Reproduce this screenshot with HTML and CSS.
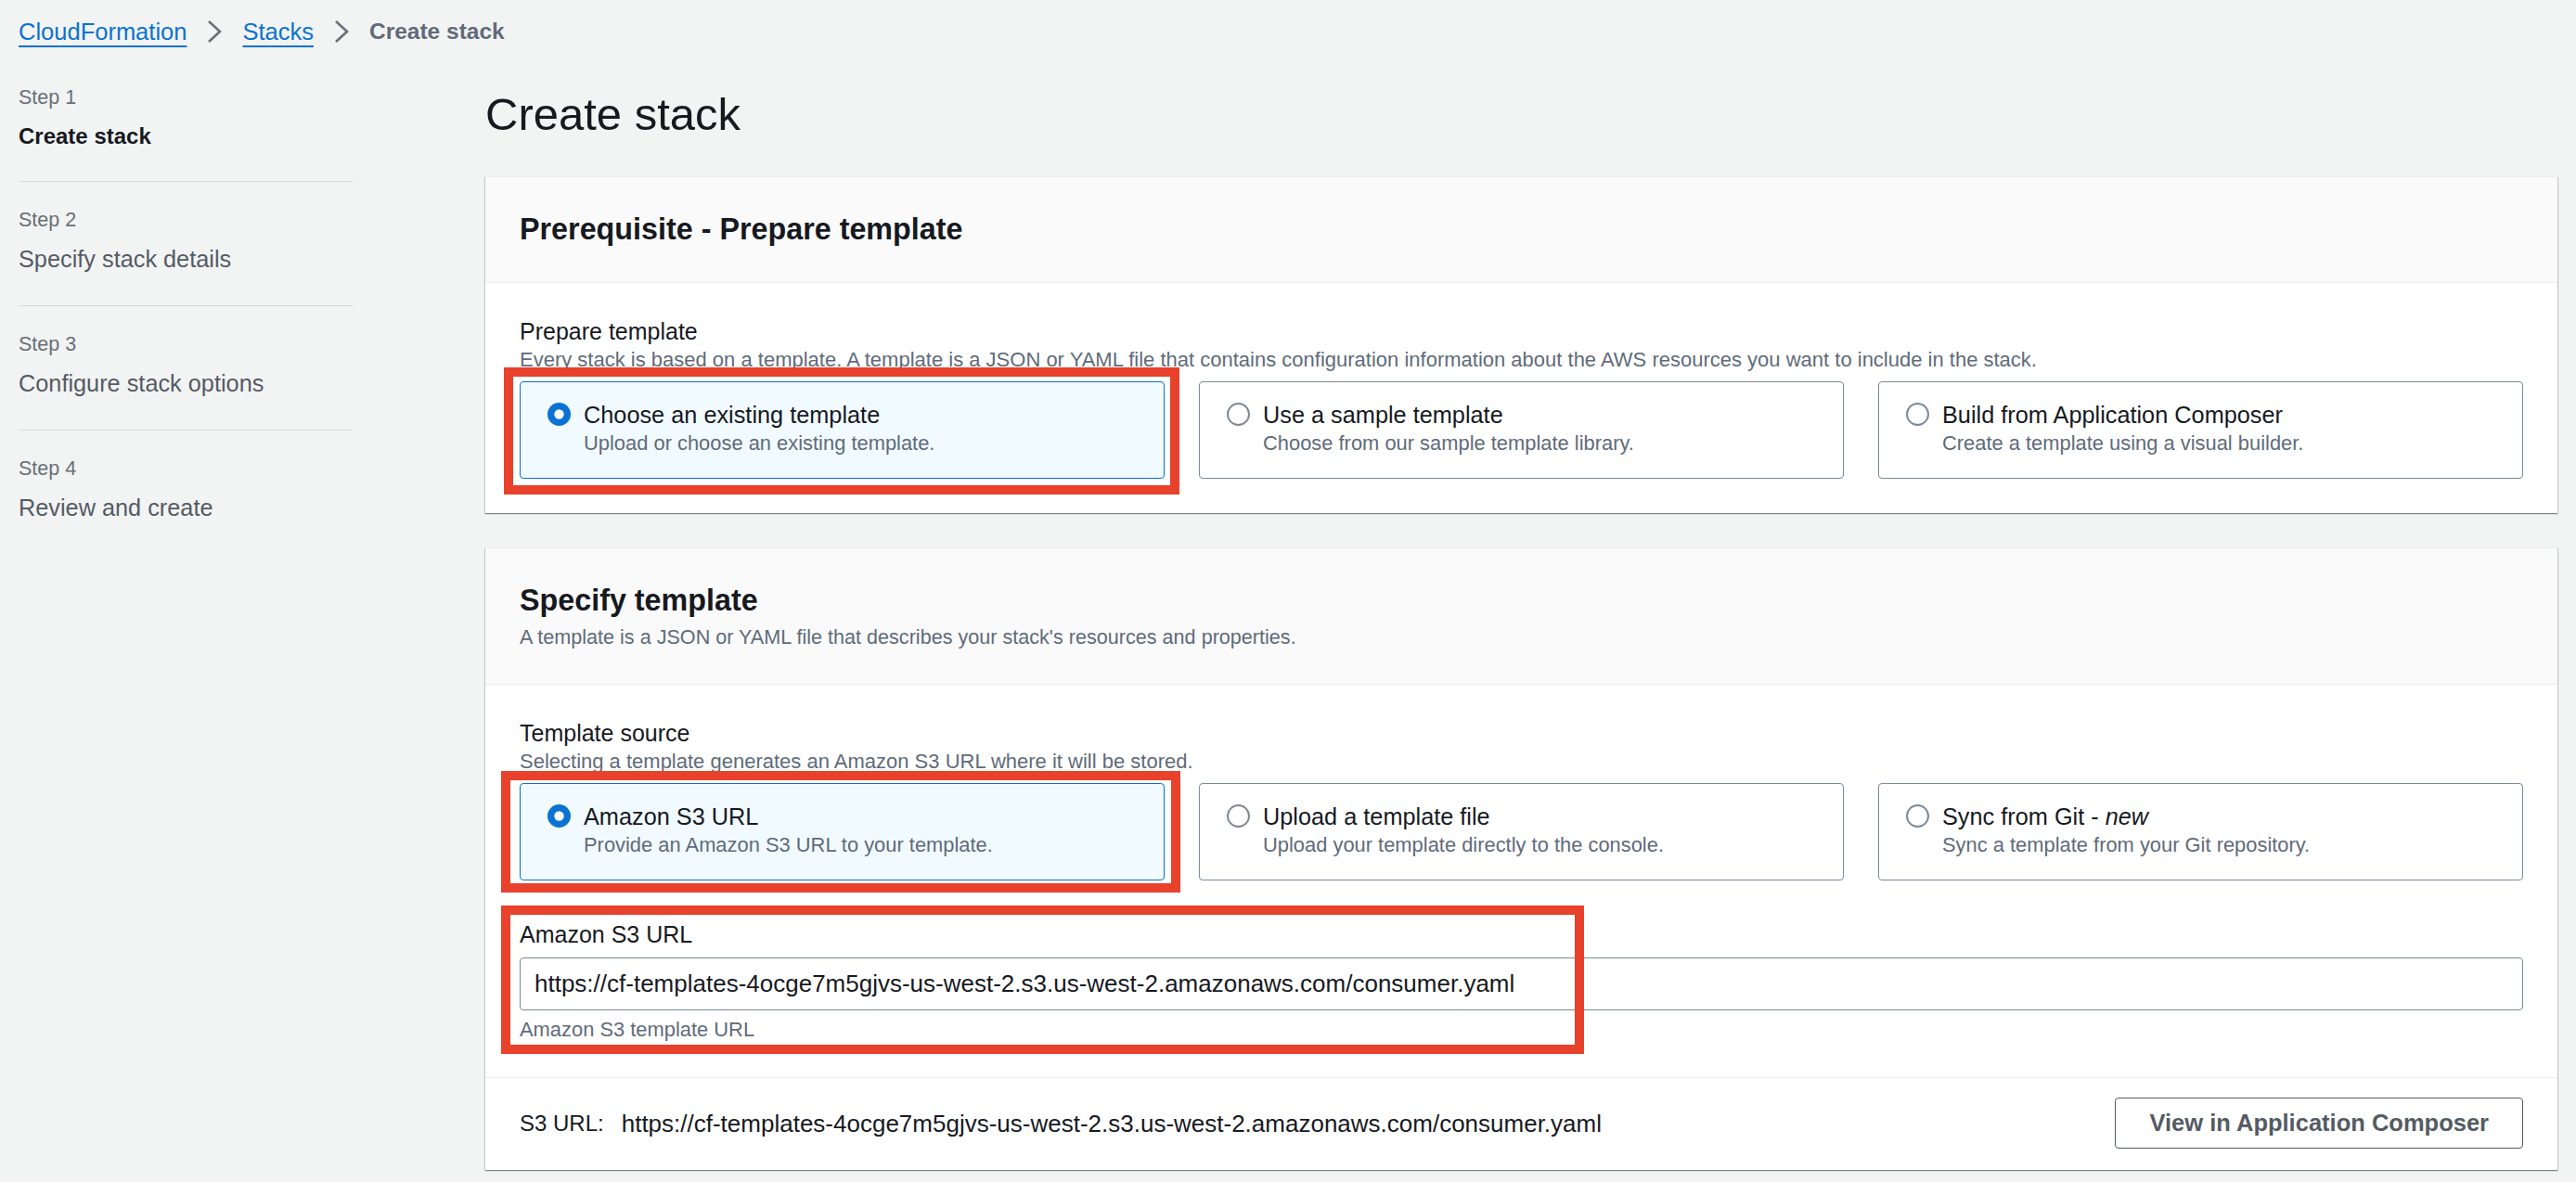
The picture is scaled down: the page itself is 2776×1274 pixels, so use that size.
FILE: index.html
```html
<!DOCTYPE html>
<html lang="en">
<head>
<meta charset="utf-8">
<title>Create stack</title>
<link rel="stylesheet" href="styles.css">
</head>
<body>
<nav class="breadcrumbs">
  <a class="crumb-link" href="#">CloudFormation</a>
  <svg class="crumb-sep" viewBox="0 0 18 26"><polyline points="3,2 15,13 3,24"/></svg>
  <a class="crumb-link" href="#">Stacks</a>
  <svg class="crumb-sep" viewBox="0 0 18 26"><polyline points="3,2 15,13 3,24"/></svg>
  <span class="crumb-current">Create stack</span>
</nav>
<div class="wizard">
  <ol class="steps">
    <li class="step step-active"><span class="step-num">Step 1</span><span class="step-title">Create stack</span></li>
    <li class="step"><span class="step-num">Step 2</span><span class="step-title">Specify stack details</span></li>
    <li class="step"><span class="step-num">Step 3</span><span class="step-title">Configure stack options</span></li>
    <li class="step"><span class="step-num">Step 4</span><span class="step-title">Review and create</span></li>
  </ol>
  <main class="main">
    <h1 class="page-title">Create stack</h1>

    <section class="card">
      <header class="card-header">
        <h2 class="card-title">Prerequisite - Prepare template</h2>
      </header>
      <div class="card-body">
        <div class="field-label">Prepare template</div>
        <div class="field-desc">Every stack is based on a template. A template is a JSON or YAML file that contains configuration information about the AWS resources you want to include in the stack.</div>
        <div class="tiles">
          <div class="tile tile-selected">
            <svg class="radio" viewBox="0 0 25 25"><circle cx="12.5" cy="12.5" r="12.5" class="radio-on"/><circle cx="12.5" cy="12.5" r="5.2" class="radio-dot"/></svg>
            <div class="tile-text">
              <div class="tile-title">Choose an existing template</div>
              <div class="tile-desc">Upload or choose an existing template.</div>
            </div>
            <span class="annot annot-1"></span>
          </div>
          <div class="tile">
            <svg class="radio" viewBox="0 0 25 25"><circle cx="12.5" cy="12.5" r="11.5" class="radio-off"/></svg>
            <div class="tile-text">
              <div class="tile-title">Use a sample template</div>
              <div class="tile-desc">Choose from our sample template library.</div>
            </div>
          </div>
          <div class="tile">
            <svg class="radio" viewBox="0 0 25 25"><circle cx="12.5" cy="12.5" r="11.5" class="radio-off"/></svg>
            <div class="tile-text">
              <div class="tile-title">Build from Application Composer</div>
              <div class="tile-desc">Create a template using a visual builder.</div>
            </div>
          </div>
        </div>
      </div>
    </section>

    <section class="card">
      <header class="card-header">
        <h2 class="card-title">Specify template</h2>
        <p class="card-subtitle">A template is a JSON or YAML file that describes your stack's resources and properties.</p>
      </header>
      <div class="card-body">
        <div class="field-label">Template source</div>
        <div class="field-desc">Selecting a template generates an Amazon S3 URL where it will be stored.</div>
        <div class="tiles">
          <div class="tile tile-selected">
            <svg class="radio" viewBox="0 0 25 25"><circle cx="12.5" cy="12.5" r="12.5" class="radio-on"/><circle cx="12.5" cy="12.5" r="5.2" class="radio-dot"/></svg>
            <div class="tile-text">
              <div class="tile-title">Amazon S3 URL</div>
              <div class="tile-desc">Provide an Amazon S3 URL to your template.</div>
            </div>
            <span class="annot annot-2"></span>
          </div>
          <div class="tile">
            <svg class="radio" viewBox="0 0 25 25"><circle cx="12.5" cy="12.5" r="11.5" class="radio-off"/></svg>
            <div class="tile-text">
              <div class="tile-title">Upload a template file</div>
              <div class="tile-desc">Upload your template directly to the console.</div>
            </div>
          </div>
          <div class="tile">
            <svg class="radio" viewBox="0 0 25 25"><circle cx="12.5" cy="12.5" r="11.5" class="radio-off"/></svg>
            <div class="tile-text">
              <div class="tile-title">Sync from Git - <em>new</em></div>
              <div class="tile-desc">Sync a template from your Git repository.</div>
            </div>
          </div>
        </div>
        <div class="field-s3">
          <label class="field-label" for="s3url">Amazon S3 URL</label>
          <input id="s3url" class="url-input" type="text" readonly value="https://cf-templates-4ocge7m5gjvs-us-west-2.s3.us-west-2.amazonaws.com/consumer.yaml">
          <div class="field-hint">Amazon S3 template URL</div>
          <span class="annot annot-3"></span>
        </div>
      </div>
      <footer class="card-footer">
        <div class="s3-url"><span class="s3-label">S3 URL:</span><span class="s3-value">https://cf-templates-4ocge7m5gjvs-us-west-2.s3.us-west-2.amazonaws.com/consumer.yaml</span></div>
        <button class="btn" type="button">View in Application Composer</button>
      </footer>
    </section>
  </main>
</div>
</body>
</html>
```
FILE: styles.css
```css
* { box-sizing: border-box; }

body {
  margin: 0;
  background: #f2f3f3;
  font-family: "Liberation Sans", Arial, sans-serif;
  color: #16191f;
}

/* Breadcrumbs */
.breadcrumbs {
  display: flex;
  align-items: center;
  gap: 21px;
  height: 51px;
  padding: 17px 20px 0;
}
.crumb-link {
  font-size: 25.5px;
  line-height: 34px;
  color: #0972d3;
  text-decoration: underline;
  text-decoration-thickness: 2px;
  text-underline-offset: 6px;
}
.crumb-sep {
  width: 18px;
  height: 26px;
  fill: none;
  stroke: #687078;
  stroke-width: 2.6;
}
.crumb-current {
  font-size: 24.5px;
  line-height: 34px;
  font-weight: 700;
  color: #5f6b7a;
}

/* Layout */
.wizard {
  display: flex;
  gap: 143px;
  padding: 39px 20px 20px;
}

.steps {
  flex: none;
  width: 360px;
  list-style: none;
  margin: 0;
  padding: 0;
}
.step {
  display: flex;
  flex-direction: column;
  padding: 26px 0 33px;
  border-bottom: 1px solid #d5dbdb;
}
.step:first-child { padding-top: 0; padding-bottom: 31px; }
.step:last-child { border-bottom: none; }
.step-num {
  font-size: 21.5px;
  line-height: 30px;
  color: #687078;
}
.step-title {
  margin-top: 10px;
  font-size: 25.3px;
  line-height: 34px;
  color: #545b64;
}
.step-active .step-title {
  font-size: 24px;
  font-weight: 700;
  color: #16191f;
}

.main {
  flex: 1;
  min-width: 0;
}
.page-title {
  margin: 3px 0 37px;
  font-size: 49px;
  line-height: 60px;
  font-weight: 400;
}

/* Cards */
.card {
  background: #fff;
  border-top: 1px solid #eaeded;
  box-shadow: 0 1px 1px 0 rgba(0, 28, 36, 0.3), 1px 1px 1px 0 rgba(0, 28, 36, 0.15), -1px 1px 1px 0 rgba(0, 28, 36, 0.15);
  margin-bottom: 37px;
}
.card-header {
  background: #fafafa;
  padding: 36px 37px 37px;
  border-bottom: 1px solid #eaeded;
}
.card-title {
  margin: 0;
  font-size: 32.3px;
  line-height: 40px;
  font-weight: 700;
}
.card-subtitle {
  margin: 6px 0 0;
  font-size: 21.6px;
  line-height: 27px;
  color: #5f6b7a;
}
.card-body {
  padding: 35px 37px 37px;
}

.field-label {
  display: block;
  font-size: 25px;
  line-height: 34px;
  color: #16191f;
}
.field-desc {
  font-size: 22px;
  line-height: 28px;
  color: #5f6b7a;
}

/* Tiles */
.tiles {
  display: grid;
  grid-template-columns: repeat(3, 1fr);
  gap: 37px;
  margin-top: 9px;
}
.tile {
  position: relative;
  display: flex;
  align-items: flex-start;
  gap: 14px;
  padding: 18px 28px 23px 29px;
  border: 1px solid #7d8998;
  border-radius: 4px;
  background: #fff;
}
.tile-selected {
  border-color: #0972d3;
  background: #f1faff;
}
.radio {
  flex: none;
  width: 25px;
  height: 25px;
  margin-top: 4px;
}
.radio-on { fill: #0972d3; }
.radio-dot { fill: #fff; }
.radio-off { fill: #fff; stroke: #7d8998; stroke-width: 2; }
.tile-title {
  font-size: 25.3px;
  line-height: 34px;
}
.tile-desc {
  font-size: 21.9px;
  line-height: 28px;
  color: #5f6b7a;
}

/* S3 URL field */
.field-s3 {
  position: relative;
  margin-top: 41px;
}
.url-input {
  display: block;
  width: 100%;
  height: 57px;
  margin: 8px 0 0;
  padding: 0 15px;
  border: 1px solid #7d8998;
  border-radius: 4px;
  background: #fff;
  font-family: inherit;
  font-size: 26px;
  color: #16191f;
  outline: none;
}
.field-hint {
  margin-top: 7px;
  font-size: 21.9px;
  line-height: 28px;
  color: #5f6b7a;
}

/* Footer */
.card-footer {
  display: flex;
  align-items: center;
  justify-content: space-between;
  padding: 21px 37px 23px;
  border-top: 1px solid #eaeded;
}
.s3-url {
  display: flex;
  gap: 19px;
  line-height: 34px;
}
.s3-label { font-size: 24px; }
.s3-value { font-size: 26px; }
.btn {
  height: 55px;
  padding: 0 36px;
  border: 1px solid #545b64;
  border-radius: 4px;
  background: #fff;
  font-family: inherit;
  font-size: 25.5px;
  font-weight: 700;
  color: #545b64;
}

/* Red annotation boxes drawn over the screenshot */
.annot {
  position: absolute;
  border: 10px solid #e8412c;
  pointer-events: none;
  z-index: 2;
}
.annot-1 { top: -16px; right: -17px; bottom: -18px; left: -18px; }
.annot-2 { top: -14px; right: -18px; bottom: -14px; left: -21px; }
.annot-3 { top: -14px; left: -20px; width: 1167px; height: 160px; }
```
